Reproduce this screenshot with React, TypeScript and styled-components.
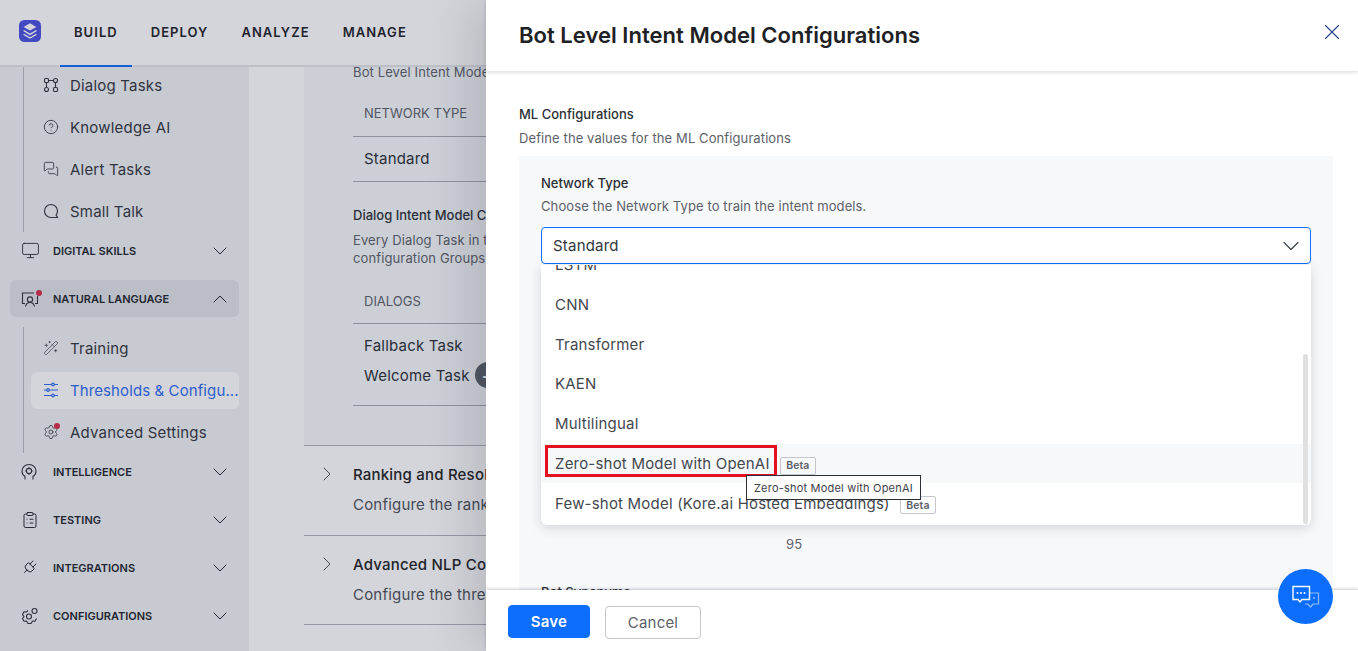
import React from 'react';
import styled, { createGlobalStyle } from 'styled-components';
import {
  ChevronDown, ChevronRight, ChevronUp, CircleHelp, ClipboardList, Monitor, Plug,
  MessagesSquare, Settings, WandSparkles, X,
} from 'lucide-react';

const GlobalStyle = createGlobalStyle`
  html, body { margin: 0; padding: 0; height: 100%; }
  body { font-family: Inter, 'Noto Sans', sans-serif; color: #202124; background: #fff; }
`;

const Page = styled.div`
  position: relative;
  width: 1358px;
  height: 651px;
  overflow: hidden;
  display: flex;
  flex-direction: column;
`;
const TopBar = styled.header`
  position: relative;
  z-index: 1;
  flex: none;
  height: 65px;
  border-bottom: 2px solid #e4e5e9;
  background: #fff;
  display: flex;
  align-items: center;
  padding-left: 19px;
`;
const Logo = styled.svg`
  width: 22px;
  height: 22px;
  margin: -3px 19px 0 0;
`;
const Tabs = styled.nav`
  display: flex;
  gap: 5px;
  height: 100%;
`;
const Tab = styled.div<{ $active?: boolean }>`
  padding: 0 14px 1px;
  margin-bottom: -2px;
  display: flex;
  align-items: center;
  font-size: 13px;
  font-weight: 600;
  letter-spacing: 1.05px;
  color: #1d2129;
  border-bottom: 2px solid ${(p) => (p.$active ? '#0d6efd' : 'transparent')};
  box-sizing: border-box;
`;
const Body = styled.div`
  flex: 1;
  min-height: 0;
  display: flex;
  overflow: hidden;
`;
const Sidebar = styled.aside`
  flex: none;
  box-sizing: border-box;
  width: 249px;
  padding: 0 10px;
  margin-top: -3px;
  background: #f0f2f6;
`;
const SubList = styled.div<{ $mt?: number }>`
  margin: ${(p) => p.$mt ?? 0}px 0 0 13px;
  border-left: 1px solid #b9bcc4;
  padding: 2.5px 0 2.5px 7px;
  display: flex;
  flex-direction: column;
  gap: 5px;
`;
const SubItem = styled.div<{ $active?: boolean }>`
  height: 37px;
  padding-left: 12px;
  border-radius: 6px;
  display: flex;
  align-items: center;
  gap: 11px;
  font-size: 15px;
  letter-spacing: ${(p) => (p.$active ? 0.1 : 0.2)}px;
  white-space: nowrap;
  overflow: hidden;
  color: ${(p) => (p.$active ? '#2f6bf0' : '#33363d')};
  background: ${(p) => (p.$active ? '#ffffff' : 'transparent')};
  & svg { flex: none; width: 16px; height: 16px; }
`;
const IconWrap = styled.span<{ $w?: number }>`
  position: relative;
  flex: none;
  display: flex;
  width: ${(p) => p.$w ?? 16}px;
`;
const Dot = styled.span<{ $left: number; $top: number }>`
  position: absolute;
  top: ${(p) => p.$top}px;
  left: ${(p) => p.$left}px;
  width: 6px;
  height: 6px;
  border-radius: 50%;
  background: #d92d4a;
`;
const Section = styled.div<{ $open?: boolean }>`
  height: 37px;
  margin-bottom: ${(p) => (p.$open ? 0 : 11)}px;
  padding: 0 7px 0 11px;
  border-radius: 6px;
  display: flex;
  align-items: center;
  font-size: 11px;
  font-weight: 600;
  color: #22252c;
  background: ${(p) => (p.$open ? '#e1e3e8' : 'transparent')};
  & svg { flex: none; }
`;
const SectionName = styled.span`
  flex: 1;
`;
const Main = styled.main`
  flex: 1;
  min-width: 0;
  padding-left: 55px;
  margin-top: -4px;
  white-space: nowrap;
  overflow: hidden;
`;
const Panel = styled.section`
  background: #f5f8fb;
  border-bottom: 1px solid #b0b3bb;
  padding: 0 0 39px 49px;
`;
const Muted = styled.div`
  font-size: 13px;
  line-height: 18px;
  letter-spacing: 0.12px;
  color: #5d6169;
`;
const Heading = styled.div`
  font-size: 13px;
  line-height: 18px;
  font-weight: 500;
  color: #2c2f36;
  margin: 24px 0 7px;
`;
const HeadCell = styled.div<{ $pt: number; $h: number }>`
  height: ${(p) => p.$h}px;
  box-sizing: border-box;
  padding: ${(p) => p.$pt}px 0 0 11px;
  font-size: 13px;
  line-height: 18px;
  color: #5d6169;
  border-bottom: 1px solid #a7aab2;
`;
const Cell = styled.div<{ $h: number; $pb?: number }>`
  height: ${(p) => p.$h}px;
  padding: 0 0 ${(p) => p.$pb ?? 0}px 11px;
  display: flex;
  align-items: center;
  gap: 5px;
  font-size: 15px;
  letter-spacing: 0.2px;
  color: #2b2e35;
`;
const RowLine = styled.div`
  border-top: 1px solid #a7aab2;
`;
const PlusBadge = styled.span`
  width: 26px;
  height: 26px;
  border-radius: 50%;
  background: #5b5f69;
  color: #fff;
  display: flex;
  align-items: center;
  justify-content: center;
  font-size: 18px;
  font-weight: 600;
`;
const Collapse = styled.section`
  height: 89.5px;
  box-sizing: border-box;
  padding-top: 19px;
  display: flex;
  border-bottom: 1px solid #b0b3bb;
  & > svg { flex: none; margin: -3px 14px 0 11px; color: #4b4f57; }
`;
const CollapseTitle = styled.div`
  font-size: 15px;
  line-height: 20px;
  font-weight: 500;
  letter-spacing: 0.2px;
  color: #202124;
  margin-bottom: 10px;
`;
const CollapseText = styled.div`
  font-size: 15px;
  line-height: 20px;
  letter-spacing: 0.2px;
  color: #4d5159;
`;
const Scrim = styled.div`
  position: absolute;
  inset: 0;
  z-index: 2;
  background: rgba(40, 45, 70, 0.2);
`;
const Drawer = styled.aside`
  position: absolute;
  z-index: 3;
  top: 0;
  bottom: 0;
  right: 0;
  width: 872px;
  background: #fff;
  box-shadow: -18px 0 40px rgba(30, 34, 50, 0.13);
  display: flex;
  flex-direction: column;
`;
const DrawerHead = styled.div`
  position: relative;
  z-index: 1;
  flex: none;
  height: 71px;
  padding: 0 13px 1px 33px;
  box-sizing: border-box;
  display: flex;
  align-items: center;
  justify-content: space-between;
  box-shadow: 0 1px 4px rgba(30, 34, 50, 0.18);
  & svg { margin-top: -6px; color: #27408b; }
`;
const DrawerTitle = styled.h1`
  margin: 0;
  font-size: 22px;
  line-height: 30px;
  font-weight: 600;
  letter-spacing: 0.03px;
  color: #202124;
`;
const DrawerBody = styled.div`
  flex: 1;
  min-height: 0;
  overflow: hidden;
  padding: 34px 25px 0 33px;
`;
const SectionLabel = styled.div`
  font-size: 13px;
  line-height: 18px;
  font-weight: 500;
  color: #2c2f36;
`;
const SectionHint = styled.div<{ $mt: number }>`
  margin-top: ${(p) => p.$mt}px;
  font-size: 13px;
  line-height: 18px;
  letter-spacing: 0.1px;
  color: #5d6169;
`;
const GreyBox = styled.div`
  margin-top: 9px;
  padding: 18px 22px 22px;
  background: #f7f8fa;
`;
const SelectWrap = styled.div`
  position: relative;
  margin-top: 12px;
`;
const SelectBox = styled.div`
  box-sizing: border-box;
  height: 37px;
  padding: 0 5px 0 11px;
  border: 1px solid #0d6efd;
  border-radius: 4px;
  background: #fff;
  display: flex;
  align-items: center;
  justify-content: space-between;
  font-size: 15px;
  letter-spacing: 0.2px;
  color: #33363d;
  & svg { color: #3a3f4a; }
`;
const Dropdown = styled.div`
  position: absolute;
  z-index: 2;
  top: 38px;
  left: 0;
  right: 0;
  height: 260px;
  overflow: hidden;
  border-radius: 0 0 6px 6px;
  background: #fff;
  box-shadow: 0 3px 12px rgba(30, 34, 50, 0.16);
`;
const OptionList = styled.div`
  margin-top: -20.5px;
`;
const Option = styled.div<{ $hover?: boolean }>`
  position: relative;
  height: 39.83px;
  padding-left: 14px;
  display: flex;
  align-items: center;
  gap: 10px;
  font-size: 15px;
  letter-spacing: 0.2px;
  color: #44474e;
  background: ${(p) => (p.$hover ? '#f7f8fa' : 'transparent')};
`;
const BetaTag = styled.span`
  margin-top: 4px;
  padding: 0 5.5px;
  height: 16px;
  border: 1px solid #c4c6cb;
  border-radius: 2px;
  display: flex;
  align-items: center;
  font-size: 10.5px;
  font-weight: 600;
  letter-spacing: 0.1px;
  color: #5d6169;
`;
const RedBox = styled.span`
  position: absolute;
  top: 1px;
  left: 4px;
  width: 226px;
  height: 26px;
  border: 3px solid #e4101f;
`;
const ScrollThumb = styled.div`
  position: absolute;
  top: 89px;
  right: 3px;
  bottom: 1px;
  width: 5px;
  border-radius: 3px;
  background: #e0e0e0;
`;
const Tip = styled.div`
  position: absolute;
  z-index: 3;
  top: 248px;
  left: 205px;
  height: 25px;
  box-sizing: border-box;
  padding: 0 7px;
  border: 1px solid #2c2f36;
  background: #fff;
  display: flex;
  align-items: center;
  font-size: 11px;
  letter-spacing: 0.2px;
  color: #3f424a;
  white-space: nowrap;
`;
const SliderValue = styled.div`
  margin: 271px 0 0 245px;
  font-size: 13px;
  line-height: 18px;
  letter-spacing: 0.3px;
  color: #5d6169;
`;
const DrawerSubHead = styled.div`
  margin-top: 30px;
  font-size: 13px;
  line-height: 18px;
  font-weight: 500;
  color: #2c2f36;
`;
const DrawerFoot = styled.div`
  position: relative;
  z-index: 1;
  flex: none;
  height: 61px;
  box-sizing: border-box;
  padding: 15px 0 0 22px;
  display: flex;
  align-items: flex-start;
  gap: 15px;
  background: #fff;
  box-shadow: 0 -1px 3px rgba(30, 34, 50, 0.24);
`;
const Button = styled.button<{ $primary?: boolean }>`
  height: 33px;
  margin-top: ${(p) => (p.$primary ? 0 : 1)}px;
  width: ${(p) => (p.$primary ? 82 : 96)}px;
  box-sizing: border-box;
  border-radius: 4px;
  border: 1px solid ${(p) => (p.$primary ? '#0d6efd' : '#c4c6cb')};
  background: ${(p) => (p.$primary ? '#0d6efd' : '#fff')};
  color: ${(p) => (p.$primary ? '#fff' : '#5d6169')};
  font-family: inherit;
  font-size: 15px;
  font-weight: ${(p) => (p.$primary ? 600 : 400)};
  letter-spacing: 0.2px;
`;
const ChatButton = styled.div`
  position: absolute;
  z-index: 4;
  right: 25px;
  bottom: 27px;
  width: 55px;
  height: 55px;
  border-radius: 50%;
  background: #0d6efd;
  display: flex;
  align-items: center;
  justify-content: center;
`;

const DialogIcon = () => (
  <svg viewBox="0 0 16 16" fill="none" stroke="#33363d" strokeWidth="1.1">
    <rect x="1.5" y="1.5" width="4" height="4" rx="1" />
    <circle cx="12.5" cy="3.5" r="2" />
    <circle cx="3.5" cy="12.5" r="2" />
    <rect x="10.5" y="10.5" width="4" height="4" rx="1" />
    <path d="M3.5 5.500v5M12.500 5.500v5M5.500 3.500h5" />
  </svg>
);
const TalkIcon = () => (
  <svg viewBox="0 0 16 16" fill="none" stroke="#33363d" strokeWidth="1.2">
    <path d="M14.500 14.500H8a6.500 6.500 0 1 1 6.500-6.500c0 1.600-.5 3-1.400 4.100z" />
  </svg>
);
const SlidersIcon = () => (
  <svg viewBox="0 0 16 16" fill="none" stroke="#2f6bf0" strokeWidth="1.2">
    <path d="M1 2.500h14M1 8h14M1 13.500h14" />
    <circle cx="10" cy="2.500" r="1.300" fill="#fff" />
    <circle cx="5" cy="8" r="1.300" fill="#fff" />
    <circle cx="10" cy="13.500" r="1.300" fill="#fff" />
  </svg>
);
const LessonIcon = () => (
  <svg width="18" height="18" viewBox="0 0 18 18" fill="none" stroke="#2e3138" strokeWidth="1.1">
    <path d="M13 3H1.500v10.500H4M14 13.500h2.500V6" />
    <circle cx="9" cy="9.500" r="2.600" />
    <path d="M4.500 16.500c.5-2.600 2.200-4 4.500-4s4 1.400 4.500 4" />
  </svg>
);
const BrainIcon = () => (
  <svg width="16" height="18" viewBox="0 0 16 18" fill="none" stroke="#2e3138" strokeWidth="1.1">
    <path d="M4 16.500v-3C2.300 12.300 1 10.600 1 8.200 1 4.300 4 1.500 8 1.500s7 2.800 7 6.700c0 2.400-1.300 4.100-3 5.300v3" />
    <circle cx="8" cy="8" r="2.600" />
    <path d="M8 4.200v1.200M8 10.600v1.200M4.200 8h1.200M10.600 8h1.200" />
  </svg>
);
const GearPairIcon = () => (
  <svg width="18" height="18" viewBox="0 0 18 18" fill="none" stroke="#2e3138" strokeWidth="1.1">
    <path d="M7 3.500 5.500 5 3 4.800 1.500 7.500 3 9.500l-1.500 2L3 14.200l2.500-.2L7 16.500h3l1.500-2.500 2.500.2 1.500-2.700" />
    <circle cx="8" cy="9.500" r="2.500" />
    <circle cx="13.500" cy="4" r="2.500" />
  </svg>
);

const topItems = [
  { label: 'Dialog Tasks', icon: <DialogIcon /> },
  { label: 'Knowledge AI', icon: <CircleHelp strokeWidth={1.3} /> },
  { label: 'Alert Tasks', icon: <MessagesSquare strokeWidth={1.3} /> },
  { label: 'Small Talk', icon: <TalkIcon /> },
];
const closedSections = [
  { label: 'INTELLIGENCE', icon: <BrainIcon /> },
  { label: 'TESTING', icon: <ClipboardList size={18} strokeWidth={1.3} /> },
  { label: 'INTEGRATIONS', icon: <Plug size={17} strokeWidth={1.3} style={{ transform: 'rotate(45deg)' }} /> },
  { label: 'CONFIGURATIONS', icon: <GearPairIcon /> },
];
const options = ['CNN', 'Transformer', 'KAEN', 'Multilingual'];

function App() {
  return (
    <Page>
      <GlobalStyle />
      <TopBar>
        <Logo viewBox="0 0 24 24">
          <rect width="24" height="24" rx="6" fill="#4a50e0" />
          <path d="M12 3.500 19 7.500 12 11.500 5 7.500z" fill="#fff" />
          <path d="M5.500 11 12 14.700 18.500 11 19.500 12 12 16.500 4.500 12z" fill="#fff" />
          <path d="M5.500 15 12 18.700 18.500 15 19.500 16 12 20.500 4.500 16z" fill="#fff" />
        </Logo>
        <Tabs>
          <Tab $active>BUILD</Tab>
          <Tab>DEPLOY</Tab>
          <Tab>ANALYZE</Tab>
          <Tab>MANAGE</Tab>
        </Tabs>
      </TopBar>
      <Body>
        <Sidebar>
          <SubList>
            {topItems.map((item) => (
              <SubItem key={item.label}>
                {item.icon}
                {item.label}
              </SubItem>
            ))}
          </SubList>
          <Section>
            <IconWrap $w={32}>
              <Monitor size={19} strokeWidth={1.1} />
            </IconWrap>
            <SectionName>DIGITAL SKILLS</SectionName>
            <ChevronDown size={24} strokeWidth={1} />
          </Section>
          <Section $open>
            <IconWrap $w={32}>
              <LessonIcon />
              <Dot $left={15} $top={0} />
            </IconWrap>
            <SectionName>NATURAL LANGUAGE</SectionName>
            <ChevronUp size={24} strokeWidth={1} />
          </Section>
          <SubList $mt={10}>
            <SubItem>
              <WandSparkles strokeWidth={1} />
              Training
            </SubItem>
            <SubItem $active>
              <SlidersIcon />
              Thresholds &amp; Configu...
            </SubItem>
            <SubItem>
              <IconWrap>
                <Settings strokeWidth={1.2} />
                <Dot $left={11} $top={-1} />
              </IconWrap>
              Advanced Settings
            </SubItem>
          </SubList>
          {closedSections.map((section) => (
            <Section key={section.label}>
              <IconWrap $w={32}>{section.icon}</IconWrap>
              <SectionName>{section.label}</SectionName>
              <ChevronDown size={24} strokeWidth={1} />
            </Section>
          ))}
        </Sidebar>
        <Main>
          <Panel>
            <Muted>Bot Level Intent Model Configurations</Muted>
            <HeadCell $pt={23} $h={56}>NETWORK TYPE</HeadCell>
            <Cell $h={42} $pb={2}>Standard</Cell>
            <RowLine />
            <Heading>Dialog Intent Model Configurations</Heading>
            <Muted>Every Dialog Task in the bot</Muted>
            <Muted>configuration Groups</Muted>
            <HeadCell $pt={25} $h={57}>DIALOGS</HeadCell>
            <Cell $h={43}>Fallback Task</Cell>
            <Cell $h={16}>
              Welcome Task
              <PlusBadge>+</PlusBadge>
            </Cell>
            <Cell $h={22} />
            <RowLine />
          </Panel>
          <Collapse>
            <ChevronRight size={24} strokeWidth={1} />
            <div>
              <CollapseTitle>Ranking and Resolver</CollapseTitle>
              <CollapseText>Configure the ranking</CollapseText>
            </div>
          </Collapse>
          <Collapse>
            <ChevronRight size={24} strokeWidth={1} />
            <div>
              <CollapseTitle>Advanced NLP Configurations</CollapseTitle>
              <CollapseText>Configure the thresholds</CollapseText>
            </div>
          </Collapse>
        </Main>
      </Body>
      <Scrim />
      <Drawer>
        <DrawerHead>
          <DrawerTitle>Bot Level Intent Model Configurations</DrawerTitle>
          <X size={26} strokeWidth={1} />
        </DrawerHead>
        <DrawerBody>
          <SectionLabel>ML Configurations</SectionLabel>
          <SectionHint $mt={6}>Define the values for the ML Configurations</SectionHint>
          <GreyBox>
            <SectionLabel>Network Type</SectionLabel>
            <SectionHint $mt={5}>Choose the Network Type to train the intent models.</SectionHint>
            <SelectWrap>
              <SelectBox>
                Standard
                <ChevronDown size={28} strokeWidth={1} />
              </SelectBox>
              <Dropdown>
                <OptionList>
                  <Option>LSTM</Option>
                  {options.map((option) => (
                    <Option key={option}>{option}</Option>
                  ))}
                  <Option $hover>
                    Zero-shot Model with OpenAI
                    <BetaTag>Beta</BetaTag>
                    <RedBox />
                  </Option>
                  <Option>
                    Few-shot Model (Kore.ai Hosted Embeddings)
                    <BetaTag>Beta</BetaTag>
                  </Option>
                </OptionList>
                <ScrollThumb />
              </Dropdown>
              <Tip>Zero-shot Model with OpenAI</Tip>
            </SelectWrap>
            <SliderValue>95</SliderValue>
            <DrawerSubHead>Bot Synonyms</DrawerSubHead>
          </GreyBox>
        </DrawerBody>
        <DrawerFoot>
          <Button $primary>Save</Button>
          <Button>Cancel</Button>
        </DrawerFoot>
      </Drawer>
      <ChatButton>
        <svg width="30" height="24" viewBox="0 0 30 24" fill="none">
          <path d="M19 8h8.500v11H22l-2.500 3-2.500-3h-3" stroke="#8fbcff" strokeWidth="1.200" />
          <path d="M2 1.500h16.500v13H11l-2 2.500-2-2.500H2z" stroke="#fff" strokeWidth="1.400" fill="#0d6efd" />
          <circle cx="6.500" cy="8" r="1" fill="#fff" />
          <circle cx="10" cy="8" r="1" fill="#fff" />
          <circle cx="13.500" cy="8" r="1" fill="#fff" />
          <circle cx="23" cy="13" r="1" fill="#8fbcff" />
        </svg>
      </ChatButton>
    </Page>
  );
}

export default App;
